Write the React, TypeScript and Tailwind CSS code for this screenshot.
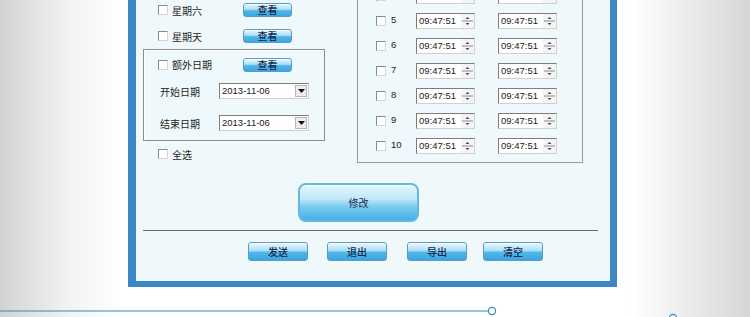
import React from "react";

const font = { fontFamily: '"Noto Sans CJK SC", "Noto Sans", sans-serif' };
const numFont = { fontFamily: '"Liberation Sans", Arial, sans-serif' };

const Check = () => (
    <span className="block w-[10px] h-[10px] shrink-0 bg-white border border-t-[#8a8a8a] border-l-[#8a8a8a] border-r-[#d6d6d6] border-b-[#d6d6d6]" />
);

const SmallBtn = ({ label, w = "w-[49px] h-[14px]" }: { label: string; w?: string }) => (
    <button className={`${w} shrink-0 rounded-[3px] border border-[#5a9cc6] bg-[linear-gradient(to_bottom,#eaf8fe_0%,#a9def6_45%,#52b7e9_55%,#3aa6e0_100%)] text-[10px] leading-none font-medium text-[#14284a] flex items-center justify-center shadow-[inset_0_1px_0_rgba(255,255,255,0.8)]`}>
        {label}
    </button>
);

const DayRow = ({ label }: { label: string }) => (
    <div className="h-[26px] flex items-center pl-[15px]">
        <Check />
        <span className="ml-[4px] w-[71px] text-[10px] text-[#1e1e1e]">{label}</span>
        <SmallBtn label="查看" />
    </div>
);

const DateSelect = () => (
    <div className="w-[90px] h-[16px] bg-white border border-t-[#7d7d7d] border-l-[#7d7d7d] border-r-[#cfcfcf] border-b-[#cfcfcf] flex items-center justify-between pl-[2px] pr-[1px]">
        <span style={numFont} className="text-[9.5px] text-[#222] leading-none">2013-11-06</span>
        <span className="w-[12px] h-[12px] bg-[#ececec] border border-[#b5b5b5] flex items-center justify-center">
            <svg width="7" height="4" viewBox="0 0 7 4"><path d="M0 0 H7 L3.5 4 Z" fill="#111" /></svg>
        </span>
    </div>
);

const TimeInput = () => (
    <div className="w-[59px] h-[16px] bg-white border border-t-[#7d7d7d] border-l-[#7d7d7d] border-r-[#d0d0d0] border-b-[#d0d0d0] flex items-center justify-between pl-[2px]">
        <span style={numFont} className="text-[9.5px] text-[#222] leading-none">09:47:51</span>
        <svg width="13" height="14" viewBox="0 0 13 14" className="shrink-0">
            <rect x="0" y="0" width="13" height="14" fill="#f4f4f4" />
            <path d="M4.5 5 L6.5 3 L8.5 5 Z" fill="#444" />
            <line x1="1" y1="7" x2="12" y2="7" stroke="#8a8a8a" strokeWidth="1" />
            <path d="M4.5 9 L6.5 11 L8.5 9 Z" fill="#444" />
        </svg>
    </div>
);

const App = () => {
    const rows = [4, 5, 6, 7, 8, 9, 10];

    return (
        <div style={font} className="w-[750px] h-[317px] overflow-hidden bg-[linear-gradient(to_right,#d3d3d3_0%,#f2f2f2_9%,#ffffff_16%,#ffffff_84%,#f0f0f0_90%,#d6d6d6_100%)]">
            {/* window */}
            <div className="ml-[128px] mt-[-30px] w-[489px] border-l-[8px] border-r-[7px] border-b-[6px] border-[#3b87c8] bg-[#eff8fa]">
                <div className="flex">
                    {/* left column */}
                    <div className="ml-[7px] w-[182px] pt-[27px]">
                        <DayRow label="星期六" />
                        <DayRow label="星期天" />

                        <div className="h-[92px] border border-[#8e8e8e] shadow-[inset_1px_1px_0_#ffffff] pl-[14px] pt-[6px]">
                            <div className="h-[17px] flex items-center">
                                <Check />
                                <span className="ml-[4px] w-[71px] text-[10px] text-[#1e1e1e]">额外日期</span>
                                <SmallBtn label="查看" />
                            </div>
                            <div className="mt-[10px] flex items-center pl-[2px]">
                                <span className="w-[59px] text-[10px] text-[#1e1e1e]">开始日期</span>
                                <DateSelect />
                            </div>
                            <div className="mt-[16px] flex items-center pl-[2px]">
                                <span className="w-[59px] text-[10px] text-[#1e1e1e]">结束日期</span>
                                <DateSelect />
                            </div>
                        </div>

                        <div className="mt-[4px] h-[18px] flex items-center pl-[15px]">
                            <Check />
                            <span className="ml-[4px] text-[10px] text-[#1e1e1e]">全选</span>
                        </div>
                    </div>

                    {/* right box */}
                    <div className="ml-[32px] w-[226px] border border-[#9a9a9a] pt-[12px] pb-[4px] pl-[18px]">
                        {rows.map((n) => (
                            <div key={n} className="h-[25px] flex items-center">
                                <Check />
                                <span style={numFont} className="ml-[5px] w-[25px] text-[9.5px] text-[#222]">{n}</span>
                                <TimeInput />
                                <span className="w-[23px]" />
                                <TimeInput />
                            </div>
                        ))}
                    </div>
                </div>

                {/* modify */}
                <div className="mt-[20px] ml-[162px]">
                    <button className="w-[121px] h-[39px] rounded-[8px] border-2 border-[#63b9e4] bg-[linear-gradient(to_bottom,#e3f6fd_0%,#bfe8f8_40%,#7fcdf0_60%,#43b0e6_100%)] text-[10px] text-[#1c2c48] flex items-center justify-center shadow-[inset_0_1px_0_rgba(255,255,255,0.9)]">
                        修改
                    </button>
                </div>

                <div className="mt-[8px] ml-[7px] w-[455px] h-px bg-[#6a6a6a]" />

                {/* bottom buttons */}
                <div className="mt-[11px] ml-[112px] pb-[20px] flex">
                    <SmallBtn label="发送" w="w-[60px] h-[19px]" />
                    <span className="w-[19px]" />
                    <SmallBtn label="退出" w="w-[60px] h-[19px]" />
                    <span className="w-[20px]" />
                    <SmallBtn label="导出" w="w-[60px] h-[19px]" />
                    <span className="w-[16px]" />
                    <SmallBtn label="清空" w="w-[60px] h-[19px]" />
                </div>
            </div>

            {/* decoration */}
            <svg width="750" height="30" viewBox="0 0 750 30" className="block">
                <line x1="0" y1="24" x2="488" y2="24" stroke="#2f8db5" strokeWidth="1.2" />
                <circle cx="492" cy="24" r="3.6" fill="#ffffff" stroke="#2f8db5" strokeWidth="1.2" />
                <circle cx="673" cy="31" r="3.6" fill="#ffffff" stroke="#2f8db5" strokeWidth="1.2" />
            </svg>
        </div>
    );
};

export default App;
